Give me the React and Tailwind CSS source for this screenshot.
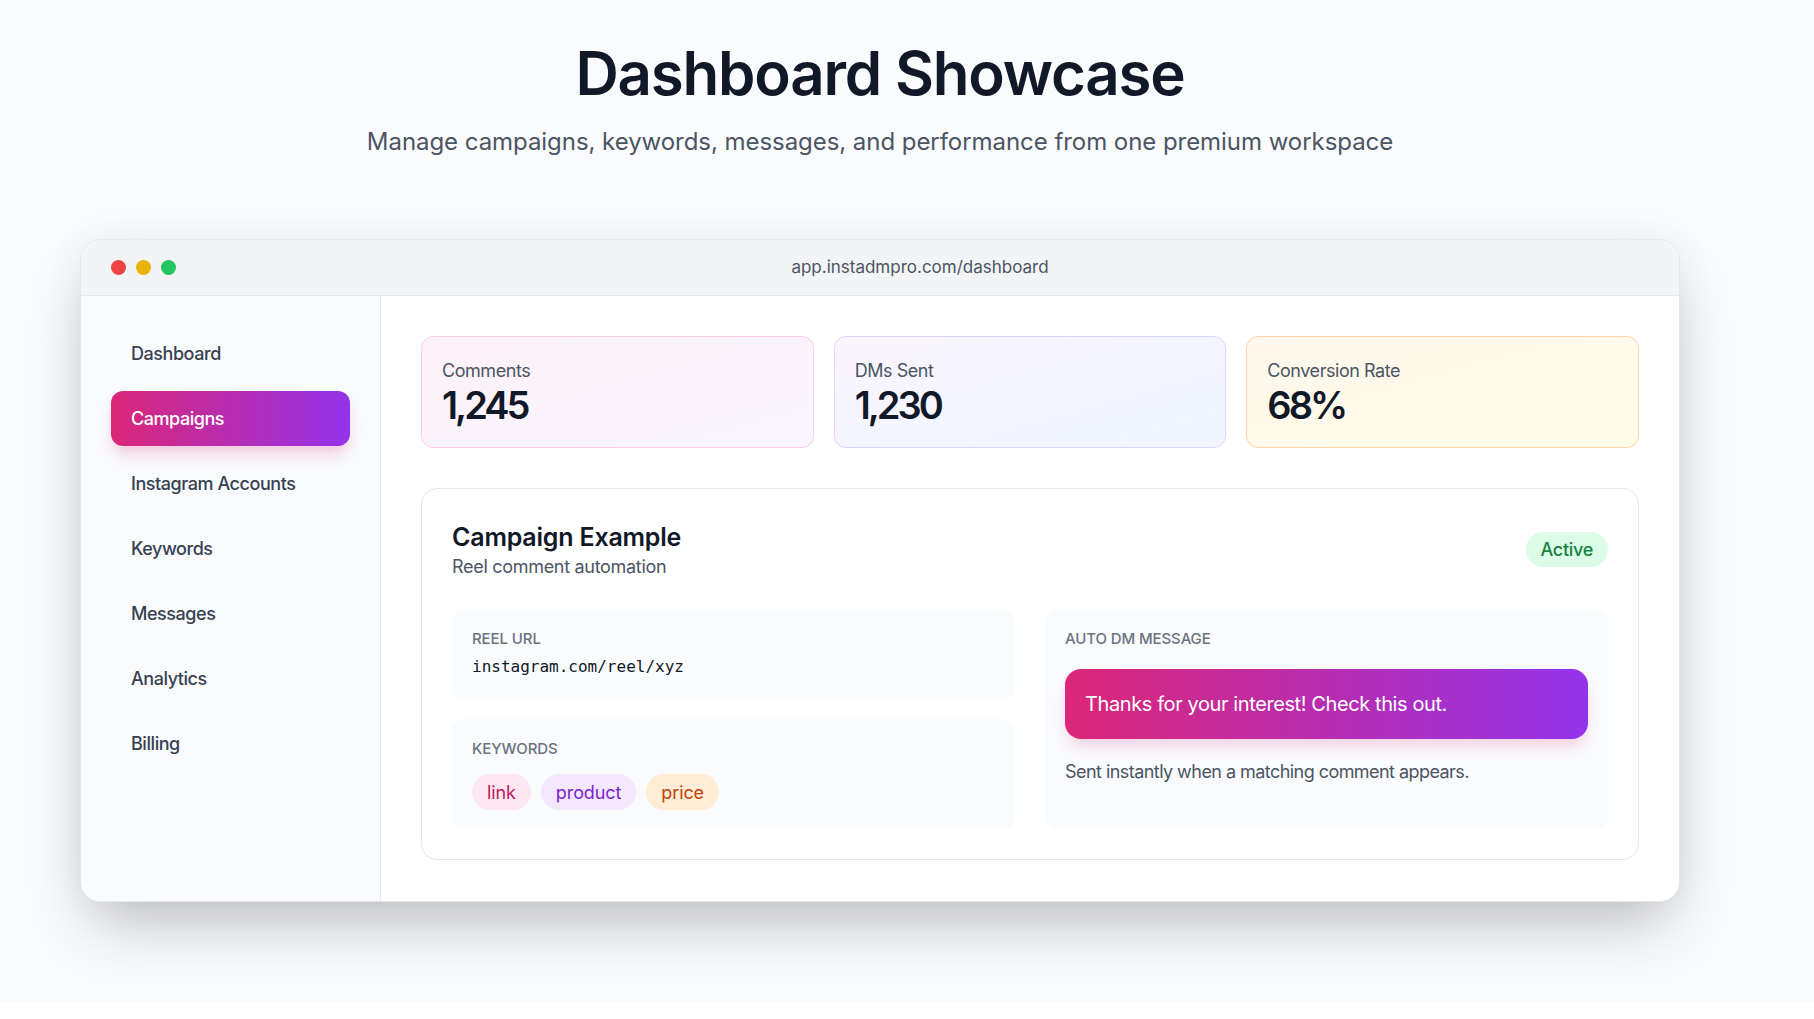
const navItems = ['Dashboard', 'Campaigns', 'Instagram Accounts', 'Keywords', 'Messages', 'Analytics', 'Billing'];

const stats = [
  { label: 'Comments', value: '1,245', box: 'border-[#fbcfe8] bg-linear-to-br/srgb from-[#fdf2f8] to-[#faf5ff]' },
  { label: 'DMs Sent', value: '1,230', box: 'border-[#ddd6fe] bg-linear-to-br/srgb from-[#faf5ff] to-[#eff6ff]' },
  { label: 'Conversion Rate', value: '68%', box: 'border-[#fed7aa] bg-linear-to-br/srgb from-[#fff7ed] to-[#fefce8]' },
];

const keywords = [
  { text: 'link', box: 'bg-[#fce7f3] text-[#be185d]' },
  { text: 'product', box: 'bg-[#f3e8ff] text-[#7e22ce]' },
  { text: 'price', box: 'bg-[#ffedd5] text-[#c2410c]' },
];

function Label({ children }) {
  return <p className="text-[15px] leading-5 font-medium tracking-[-0.1px] text-[#6b7280]">{children}</p>;
}

export default function App() {
  return (
    <div className="min-h-[1019px] bg-white font-['Inter',sans-serif] text-[#111827]">
      <div className="h-[1002px] bg-[#fafbfd] overflow-hidden">
        <header className="pt-[36px] text-center pr-[54px]">
          <h1 className="text-[60px] leading-[75px] font-semibold tracking-[-1.2px]">Dashboard Showcase</h1>
          <p className="mt-[15px] text-[24px] leading-8 tracking-[-0.05px] text-[#4b5563]">
            Manage campaigns, keywords, messages, and performance from one premium workspace
          </p>
        </header>

        <div className="mt-[81px] ml-[80px] w-[1600px] h-[663px] flex flex-col overflow-hidden rounded-[20px] border border-[#e5e7eb] bg-white shadow-[0_32px_64px_-12px_rgba(0,0,0,0.24),0_0_40px_rgba(0,0,0,0.05)]">
          <div className="h-[56px] shrink-0 flex items-center gap-[10px] px-[30px] border-b border-[#e5e7eb] bg-[#f3f4f6]">
            <span className="w-[15px] h-[15px] rounded-full bg-[#ef4444]" />
            <span className="w-[15px] h-[15px] rounded-full bg-[#eab308]" />
            <span className="w-[15px] h-[15px] rounded-full bg-[#22c55e]" />
            <span className="flex-1 ml-[5px] pt-[1px] text-center text-[17px] tracking-[0px] text-[#4b5563]">app.instadmpro.com/dashboard</span>
          </div>

          <div className="flex flex-1 min-h-0">
            <aside className="w-[300px] shrink-0 border-r border-[#e5e7eb] bg-[#fafbfd] pt-[30px] px-[30px] flex flex-col gap-[10px]">
              {navItems.map((item) => (
                <div
                  key={item}
                  className={
                    item === 'Campaigns'
                      ? 'h-[55px] flex items-center px-5 rounded-xl text-[18px] font-medium tracking-[-0.45px] text-white bg-linear-to-r/srgb from-[#db2777] to-[#9333ea] shadow-[0_10px_15px_-3px_rgba(219,39,119,0.25)]'
                      : 'h-[55px] flex items-center px-5 rounded-xl text-[18px] font-medium tracking-[-0.45px] text-[#374151]'
                  }
                >
                  {item}
                </div>
              ))}
            </aside>

            <main className="flex-1 min-w-0 p-10">
              <div className="grid grid-cols-3 gap-5">
                {stats.map((s) => (
                  <div key={s.label} className={`h-[112px] rounded-xl border px-5 pt-[22px] ${s.box}`}>
                    <p className="text-[18px] leading-6 tracking-[-0.45px] text-[#4b5563]">{s.label}</p>
                    <p className="text-[38px] leading-[44px] font-semibold tracking-[-3px]">{s.value}</p>
                  </div>
                ))}
              </div>

              <section className="mt-10 h-[372px] rounded-2xl border border-[#e5e7eb] bg-white px-[30px] pt-[32px]">
                <div className="flex items-start justify-between">
                  <div>
                    <h2 className="text-[25px] leading-8 font-semibold tracking-[-0.2px]">Campaign Example</h2>
                    <p className="mt-[2px] text-[18px] leading-6 tracking-[-0.3px] text-[#4b5563]">Reel comment automation</p>
                  </div>
                  <span className="mt-[11px] h-[35px] flex items-center px-[15px] rounded-full bg-[#dcfce7] text-[18px] font-medium tracking-[-0.3px] text-[#15803d]">Active</span>
                </div>

                <div className="mt-[30px] grid grid-cols-2 gap-[30px]">
                  <div className="flex flex-col gap-[20px]">
                    <div className="h-[90px] rounded-xl bg-[#fafbfd] px-5 pt-5">
                      <Label>REEL URL</Label>
                      <p className="mt-[6px] font-['DejaVu_Sans_Mono',monospace] text-[16px] leading-6 text-[#111827]">instagram.com/reel/xyz</p>
                    </div>
                    <div className="h-[110px] rounded-xl bg-[#fafbfd] px-5 pt-5">
                      <Label>KEYWORDS</Label>
                      <div className="mt-[15px] flex gap-[10px]">
                        {keywords.map((k) => (
                          <span key={k.text} className={`h-[36px] flex items-center px-[15px] rounded-full text-[18px] tracking-[-0.1px] ${k.box}`}>{k.text}</span>
                        ))}
                      </div>
                    </div>
                  </div>

                  <div className="rounded-xl bg-[#fafbfd] px-5 pt-5">
                    <Label>AUTO DM MESSAGE</Label>
                    <div className="mt-[20px] h-[70px] flex items-center px-5 rounded-2xl bg-linear-to-r/srgb from-[#db2777] to-[#9333ea] text-[20px] tracking-[-0.4px] text-white shadow-[0_10px_15px_-3px_rgba(219,39,119,0.2)]">
                      Thanks for your interest! Check this out.
                    </div>
                    <p className="mt-[21px] text-[18px] leading-6 tracking-[-0.55px] text-[#4b5563]">Sent instantly when a matching comment appears.</p>
                  </div>
                </div>
              </section>
            </main>
          </div>
        </div>
      </div>
    </div>
  );
}
